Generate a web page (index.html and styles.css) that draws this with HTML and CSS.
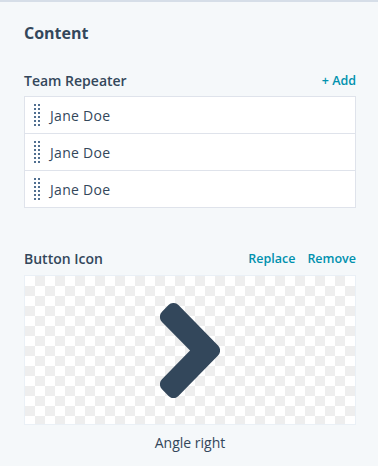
FILE: index.html
```html
<!DOCTYPE html>
<html>
<head>
<meta charset="utf-8">
<link rel="stylesheet" href="styles.css">
</head>
<body>
<div class="panel">
  <h2 class="title">Content</h2>

  <div class="field-head">
    <span class="label">Team Repeater</span>
    <div class="actions"><a class="link">+ Add</a></div>
  </div>
  <ul class="repeater">
    <li class="row"><span class="handle"></span><span class="name">Jane Doe</span></li>
    <li class="row"><span class="handle"></span><span class="name">Jane Doe</span></li>
    <li class="row"><span class="handle"></span><span class="name">Jane Doe</span></li>
  </ul>

  <div class="field-head icon-head">
    <span class="label">Button Icon</span>
    <div class="actions"><a class="link">Replace</a><a class="link">Remove</a></div>
  </div>
  <div class="preview">
    <svg class="chevron" width="60" height="95" viewBox="25 96 206 320" preserveAspectRatio="none">
      <path fill="#33475b" d="M224.3 273l-136 136c-9.4 9.4-24.6 9.4-33.9 0l-22.6-22.6c-9.4-9.4-9.4-24.6 0-33.9l96.4-96.4-96.4-96.4c-9.4-9.4-9.4-24.6 0-33.9L54.3 103c9.4-9.4 24.6-9.4 33.9 0l136 136c9.5 9.4 9.5 24.6.1 34z"/>
    </svg>
  </div>
  <div class="caption">Angle right</div>
</div>
</body>
</html>
```

FILE: styles.css
```css
* { box-sizing: border-box; }
html, body { margin: 0; padding: 0; }
body {
  background: #f5f8fa;
  border-top: 2px solid #d6dee8;
  font-family: "Open Sans", sans-serif;
  color: #33475b;
  height: 466px;
  overflow: hidden;
}
.panel {
  padding: 0 22px 0 24px;
}
.title {
  margin: 0;
  padding-top: 20px;
  font-size: 16px;
  line-height: 22px;
  font-weight: 700;
}
.field-head {
  display: flex;
  justify-content: space-between;
  align-items: center;
  height: 22px;
  margin-top: 25px;
  margin-bottom: 5px;
}
.label {
  font-size: 14px;
  font-weight: 600;
}
.actions {
  display: flex;
  gap: 12px;
}
.link {
  color: #0091ae;
  font-size: 12.5px;
  font-weight: 600;
}
.repeater {
  list-style: none;
  margin: 0;
  padding: 0;
  background: #fff;
  border: 1px solid #dfe3eb;
}
.row {
  display: flex;
  align-items: center;
  height: 37px;
  padding-left: 9px;
  border-top: 1px solid #dfe3eb;
}
.row:first-child {
  height: 36px;
  border-top: none;
}
.handle {
  width: 6px;
  height: 22px;
  background-image: radial-gradient(circle, #516f90 0 1.2px, transparent 1.3px);
  background-size: 4px 4px;
  background-position: -1px -1px;
}
.name {
  margin-left: 10px;
  font-size: 14px;
  font-weight: 400;
  letter-spacing: 0.3px;
}
.icon-head {
  margin-top: 39px;
  margin-bottom: 6px;
}
.preview {
  display: flex;
  align-items: center;
  justify-content: center;
  height: 150px;
  border: 1px solid #eaf0f6;
  background: repeating-conic-gradient(#eeeeee 0 25%, #ffffff 0 50%) 0 0 / 20px 20px;
}
.caption {
  text-align: center;
  font-size: 14px;
  font-weight: 400;
  margin-top: 8px;
}
```
